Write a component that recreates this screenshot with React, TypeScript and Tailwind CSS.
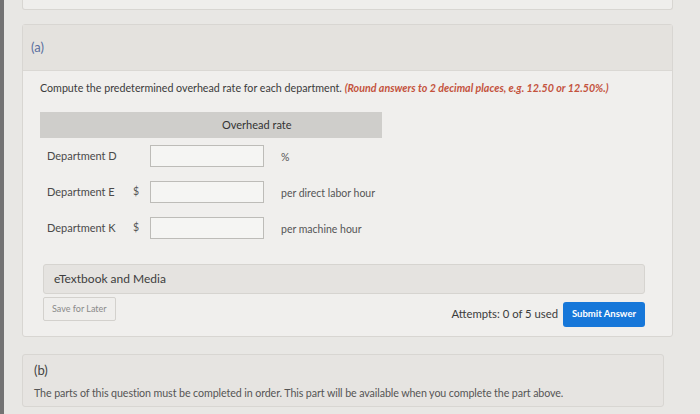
import React from "react";

const rows = [
  { label: "Department D", prefix: "", unit: "%" },
  { label: "Department E", prefix: "$", unit: "per direct labor hour" },
  { label: "Department K", prefix: "$", unit: "per machine hour" },
];

const App: React.FC = () => {
  return (
    <div className="w-[700px] h-[414px] overflow-hidden flex bg-[#e8e7e4] font-['Lato','Noto_Sans',sans-serif]">
      <div className="w-[4px] shrink-0 bg-[#737373]" />
      <div className="flex-1 min-w-0 flex flex-col pl-[18px] pr-[27px]">
        {/* previous card, cut off */}
        <div className="h-[10px] shrink-0 bg-[#efeeec] border border-t-0 border-[#d8d6d2] rounded-b-[3px]" />

        {/* Part (a) */}
        <div className="mt-[14px] shrink-0 bg-[#f0efed] border border-[#d8d6d2] rounded-[3px]">
          <div className="h-[46px] flex items-center pl-[8px] bg-[#e4e2de] border-b border-[#dad8d4]">
            <span className="text-[13px] text-[#5a6f9e]">(a)</span>
          </div>

          <div className="pl-[17px] pr-[27px] pt-[10px] pb-[9px]">
            <p className="text-[10.7px] leading-[14px] text-[#3b3b3b]">
              Compute the predetermined overhead rate for each department.{" "}
              <span className="font-bold italic text-[#c4533d]">
                (Round answers to 2 decimal places, e.g. 12.50 or 12.50%.)
              </span>
            </p>

            <div className="mt-[17px] w-[342px]">
              <div className="h-[26px] flex items-center pl-[182px] bg-[#cfcecb]">
                <span className="text-[11px] text-[#333]">Overhead rate</span>
              </div>
              <div className="flex flex-col gap-[14px] pt-[7px]">
                {rows.map((r) => (
                  <div key={r.label} className="flex items-center h-[22px]">
                    <span className="w-[93px] pl-[7px] text-[11px] text-[#4a4a4a]">{r.label}</span>
                    <span className="w-[17px] text-[10.5px] text-[#555]">{r.prefix}</span>
                    <div className="w-[114px] h-[22px] bg-[#f5f5f3] border border-[#bdbcb8]" />
                    <span className="pl-[17px] text-[10.5px] text-[#555] mt-[4px]">{r.unit}</span>
                  </div>
                ))}
              </div>
            </div>

            <div className="mt-[25px] ml-[3px] h-[30px] flex items-center pl-[10px] bg-[#e5e3e0] border border-[#d6d4d0] rounded-[3px]">
              <span className="text-[12px] text-[#3d3d3d]">eTextbook and Media</span>
            </div>

            <div className="flex items-start justify-between ml-[3px]">
              <button className="mt-[3px] h-[24px] px-[8px] text-[9px] text-[#8a8a8a] bg-[#efeeec] border border-[#d3d1cd] rounded-[2px]">
                Save for Later
              </button>
              <div className="mt-[8px] flex items-center gap-[5px]">
                <span className="text-[11.3px] text-[#3b3b3b]">Attempts: 0 of 5 used</span>
                <button className="h-[25px] w-[82px] text-[9.5px] font-bold text-white bg-[#1677d9] rounded-[3px]">
                  Submit Answer
                </button>
              </div>
            </div>
          </div>
        </div>

        {/* Part (b) */}
        <div className="mt-[17px] mr-[9px] h-[53px] shrink-0 flex flex-col pl-[11px] pt-[7px] bg-[#e6e4e1] border border-[#d8d6d2] rounded-[3px]">
          <span className="text-[13px] leading-[16px] text-[#444]">(b)</span>
          <span className="mt-[8px] text-[10.7px] leading-[13px] text-[#555] tracking-[-0.1px]">
            The parts of this question must be completed in order. This part will be available when you complete the part above.
          </span>
        </div>
      </div>
    </div>
  );
};

export default App;
